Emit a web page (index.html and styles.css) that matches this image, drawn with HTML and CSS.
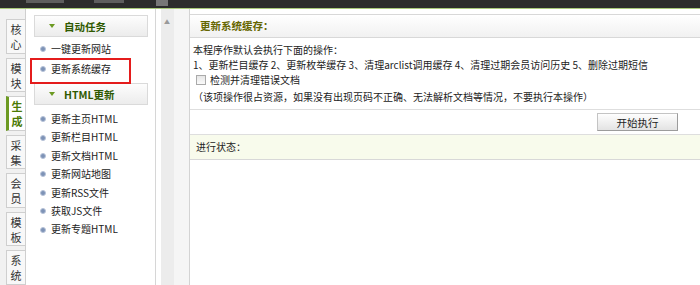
FILE: index.html
```html
<!DOCTYPE html>
<html lang="zh-CN">
<head>
    <meta charset="UTF-8">
    <title>更新系统缓存</title>
    <link rel="stylesheet" href="styles.css">
</head>
<body>

<div class="topbar">
    <span class="topbar-mark wide"></span>
    <span class="topbar-mark"></span>
    <span class="topbar-mark small"></span>
</div>

<div class="layout">
    <div class="tabs">
        <div class="tab">核<br>心</div>
        <div class="tab">模<br>块</div>
        <div class="tab active">生<br>成</div>
        <div class="tab">采<br>集</div>
        <div class="tab">会<br>员</div>
        <div class="tab">模<br>板</div>
        <div class="tab">系<br>统</div>
    </div>

    <div class="menu">
        <div class="menu-head"><span class="arrow"></span>自动任务</div>
        <ul class="menu-list first">
            <li>一键更新网站</li>
            <li class="marked">更新系统缓存</li>
        </ul>
        <div class="menu-head"><span class="arrow"></span>HTML更新</div>
        <ul class="menu-list">
            <li>更新主页HTML</li>
            <li>更新栏目HTML</li>
            <li>更新文档HTML</li>
            <li>更新网站地图</li>
            <li>更新RSS文件</li>
            <li>获取JS文件</li>
            <li>更新专题HTML</li>
        </ul>
    </div>

    <div class="gutter"><span class="gutter-arrow">▲</span></div>

    <div class="content">
        <div class="content-head">更新系统缓存：</div>
        <div class="content-body">
            <p>本程序作默认会执行下面的操作：</p>
            <p>1、更新栏目缓存 2、更新枚举缓存 3、清理arclist调用缓存 4、清理过期会员访问历史 5、删除过期短信</p>
            <p class="check-row"><span class="checkbox"></span>检测并清理错误文档</p>
            <p class="note">（该项操作很占资源，如果没有出现页码不正确、无法解析文档等情况，不要执行本操作）</p>
        </div>
        <div class="button-row">
            <button class="run-button">开始执行</button>
        </div>
        <div class="status-row">进行状态：</div>
    </div>
</div>

</body>
</html>
```

FILE: styles.css
```css
* {
    box-sizing: border-box;
    margin: 0;
    padding: 0;
}

body {
    width: 700px;
    height: 285px;
    overflow: hidden;
    background: #FFFFFF;
    font-family: "Noto Sans CJK SC", "Liberation Sans", sans-serif;
    font-size: 10px;
    color: #222;
}

.topbar {
    height: 9px;
    background: #2c2c2c;
    border-bottom: 1px solid #a9c97a;
    display: flex;
    gap: 30px;
    padding-left: 26px;
}

/* обрезанные сверху пункты верхнего меню */
.topbar-mark {
    width: 30px;
    height: 3px;
    background: #5e5e5e;
}

.topbar-mark.wide {
    width: 38px;
}

.topbar-mark.small {
    width: 12px;
    height: 6px;
    margin-left: 2px;
    background: #777;
}

.layout {
    display: flex;
    height: 276px;
}

/* вертикальные вкладки слева */
.tabs {
    width: 26px;
    background: #f1f1f1;
    border-right: 1px solid #cfcfcf;
    padding: 10px 0 0 6px;
    display: flex;
    flex-direction: column;
    gap: 4px;
}

.tab {
    height: 35px;
    background: #f8f8f8;
    border: 1px solid #cfcfcf;
    border-right: none;
    padding-top: 2px;
    font-size: 11px;
    line-height: 15px;
    text-align: center;
    color: #333;
}

.tab.active {
    background: #FFFFFF;
    border-left: 3px solid #6c9a22;
    color: #4b7a04;
    font-weight: bold;
}

.menu {
    width: 130px;
    padding: 6px 7px 0 8px;
    border-right: 1px solid #d6d6d6;
}

.menu-head {
    height: 22px;
    border: 1px solid #dadada;
    background: linear-gradient(#fdfdfd, #ececec);
    display: flex;
    align-items: center;
    gap: 9px;
    padding-left: 14px;
    font-size: 10.5px;
    font-weight: bold;
    color: #2f5a00;
}

.arrow {
    width: 0;
    height: 0;
    border-left: 3px solid transparent;
    border-right: 3px solid transparent;
    border-top: 4px solid #6c9a22;
}

.menu-list {
    list-style: none;
    padding: 5px 0 4px 6px;
}

.menu-list.first {
    padding: 2px 0 4px 6px;
}

.menu-list li {
    display: flex;
    align-items: center;
    gap: 5px;
    line-height: 18.4px;
    color: #222;
}

.menu-list.first li {
    line-height: 20px;
}

.menu-list li::before {
    content: "";
    width: 4px;
    height: 4px;
    border-radius: 50%;
    background: #7d92b6;
    border: 1px solid #b7c3d8;
}

.menu-list li.marked {
    position: relative;
}

.menu-list li.marked::after {
    content: "";
    position: absolute;
    left: -10px;
    top: -1px;
    width: 97px;
    height: 22px;
    border: 2px solid #e41c1c;
}

.gutter {
    width: 34px;
    background: linear-gradient(to right, #ffffff 0 5px, #ececec 5px 18px, #f5f5f5 18px);
    border-right: 1px solid #d3d3d3;
    padding: 3px 0 0 8px;
}

.gutter-arrow {
    font-size: 6px;
    color: #999;
}

.content {
    flex: 1;
    padding-top: 5px;
}

.content-head {
    height: 24px;
    border-top: 1px solid #d8d8d8;
    border-bottom: 1px solid #d8d8d8;
    background: linear-gradient(#ffffff, #f1f1f1);
    padding-left: 10px;
    line-height: 22px;
    font-size: 10.5px;
    font-weight: bold;
    color: #666600;
}

.content-body {
    padding: 4px 0 0 3px;
    height: 72px;
    border-bottom: 1px solid #dedede;
}

.content-body p {
    line-height: 15px;
    white-space: nowrap;
}

.check-row {
    display: flex;
    align-items: center;
    gap: 4px;
    padding-left: 3px;
}

.checkbox {
    width: 10px;
    height: 10px;
    border: 1px solid #aaa;
    background: linear-gradient(#e6e6e6, #fafafa);
}

.content-body p.note {
    line-height: 20px;
}

.button-row {
    height: 25px;
    display: flex;
    justify-content: flex-end;
    align-items: center;
    padding-right: 22px;
    border-bottom: 1px solid #dedede;
}

.run-button {
    width: 81px;
    height: 18px;
    background: linear-gradient(#fefefe, #e3e3e3);
    border: 1px solid #c4c4c4;
    border-right-color: #9c9c9c;
    border-bottom-color: #9c9c9c;
    font-family: inherit;
    font-size: 10.5px;
    color: #222;
}

.status-row {
    height: 25px;
    background: #f8fbec;
    border-bottom: 1px solid #d8d8d8;
    padding-left: 6px;
    line-height: 24px;
}
```
